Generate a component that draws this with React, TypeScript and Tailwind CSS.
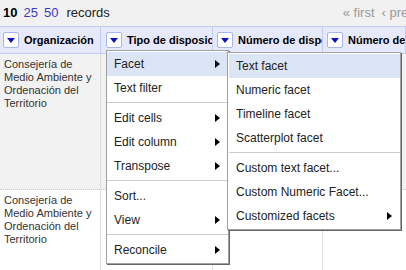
import React from "react";

const Caret = () => (
  <div className="w-[16px] h-[16px] shrink-0 bg-white border border-[#a9b6ea] rounded-[2px] flex items-center justify-center">
    <div className="w-0 h-0 border-l-[4px] border-r-[4px] border-t-[5px] border-l-transparent border-r-transparent border-t-[#1010c8]" />
  </div>
);

const Arrow = () => (
  <div className="w-0 h-0 border-t-[4px] border-b-[4px] border-l-[5px] border-t-transparent border-b-transparent border-l-black" />
);

const Item = ({ label, sub, active }: { label: string; sub?: boolean; active?: boolean }) => (
  <div className={`h-[24px] flex items-center justify-between pl-[7px] pr-[8px] ${active ? "bg-[#dbe5f5]" : ""}`}>
    <span>{label}</span>
    {sub && <Arrow />}
  </div>
);

const Sep = () => <div className="mt-[2px] mb-[3px] h-px bg-[#cccccc]" />;

const cellText = ["Consejería de", "Medio Ambiente y", "Ordenación del", "Territorio"];

const headers = [
  { name: "Organización", w: "w-[101px] pl-[3px]" },
  { name: "Tipo de disposición", w: "w-[112px] pl-[5px]" },
  { name: "Número de disposición", w: "w-[110px] pl-[4px]" },
  { name: "Número de boletín", w: "flex-1 pl-[4px]" },
];

const Cell = ({ w, text }: { w: string; text?: string[] }) => (
  <div className={`${w} shrink-0 border-r border-[#dddddd] pt-[4px] pl-[4px] pr-[2px] text-[11px] leading-[13px] text-[#333]`}>
    {text?.map((t) => (
      <div key={t}>{t}</div>
    ))}
  </div>
);

export default function App() {
  return (
    <div className="relative w-[406px] h-[270px] overflow-hidden bg-white font-['Liberation_Sans',Arial,sans-serif]">
      {/* pager */}
      <div className="h-[26px] bg-[#f1f1f1] flex items-center pl-[3px] text-[13px] whitespace-nowrap">
        <div className="flex gap-[6px]">
          <span className="font-bold text-black">10</span>
          <span className="text-[#3b3bc4]">25</span>
          <span className="text-[#3b3bc4]">50</span>
          <span className="ml-[2px] text-[#222]">records</span>
        </div>
        <div className="ml-[233px] flex gap-[7px] text-[#9a9a9a]">
          <span>« first</span>
          <span>‹ prev</span>
        </div>
      </div>

      {/* header row */}
      <div className="h-[28px] flex border-y border-[#c3ccf2] bg-[#e6e9fb]">
        {headers.map((h) => (
          <div key={h.name} className={`${h.w} shrink-0 flex items-center border-r border-[#c3ccf2] overflow-hidden whitespace-nowrap`}>
            <Caret />
            <span className="ml-[5px] text-[11px] font-bold text-black">{h.name}</span>
          </div>
        ))}
      </div>

      {/* rows */}
      <div className="h-[136px] flex bg-[#f2f2f2] border-b border-dotted border-[#c8c8c8]">
        <Cell w="w-[101px]" text={cellText} />
        <Cell w="w-[112px]" />
        <Cell w="w-[110px]" />
        <div className="flex-1" />
      </div>
      <div className="h-[80px] flex">
        <Cell w="w-[101px]" text={cellText} />
        <Cell w="w-[112px]" />
        <Cell w="w-[110px]" />
        <div className="flex-1" />
      </div>

      {/* column menu */}
      <div className="absolute left-[106px] top-[50px] w-[123px] py-[1px] bg-white border border-[#a0a0a0] shadow-[1px_1px_0_#666] text-[12px] text-[#222]">
        <Item label="Facet" sub active />
        <Item label="Text filter" />
        <Sep />
        <Item label="Edit cells" sub />
        <Item label="Edit column" sub />
        <Item label="Transpose" sub />
        <Sep />
        <Item label="Sort..." />
        <Item label="View" sub />
        <Sep />
        <Item label="Reconcile" sub />
      </div>

      {/* facet submenu */}
      <div className="absolute left-[227px] top-[52px] w-[174px] py-[1px] bg-white border border-[#a0a0a0] shadow-[1px_1px_0_#666] text-[12px] text-[#222]">
        <div className="pl-px">
          <Item label="Text facet" active />
          <Item label="Numeric facet" />
          <Item label="Timeline facet" />
          <Item label="Scatterplot facet" />
          <Sep />
          <Item label="Custom text facet..." />
          <Item label="Custom Numeric Facet..." />
          <Item label="Customized facets" sub />
        </div>
      </div>
    </div>
  );
}
